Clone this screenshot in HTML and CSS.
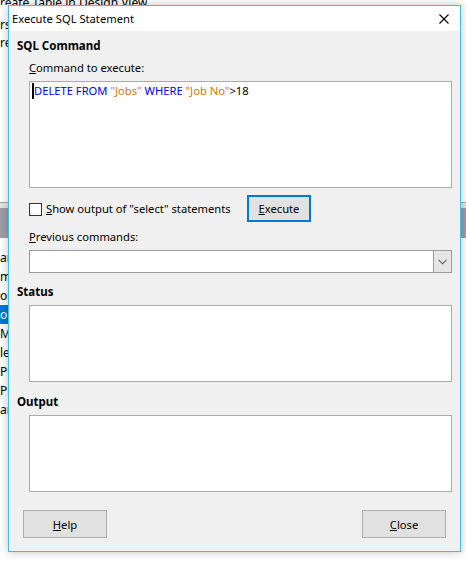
FILE: index.html
```html
<!DOCTYPE html>
<html>
<head>
<meta charset="utf-8">
<link rel="stylesheet" href="styles.css">
</head>
<body>
<div class="desktop">
  <div class="bg-top">reate Table in Design View</div>
  <div class="bg-strip bg-strip-top">
    <div class="bg-row">rs</div>
    <div class="bg-row">re</div>
  </div>
  <div class="bg-header"></div>
  <div class="bg-strip bg-list">
    <div class="bg-row">ar</div>
    <div class="bg-row">m</div>
    <div class="bg-row">ob</div>
    <div class="bg-row selected">ob</div>
    <div class="bg-row">Me</div>
    <div class="bg-row">le</div>
    <div class="bg-row">Pr</div>
    <div class="bg-row">Pr</div>
    <div class="bg-row">ar</div>
  </div>

  <div class="dialog">
    <div class="titlebar">
      <span class="title">Execute SQL Statement</span>
      <svg class="close-x" width="10" height="10" viewBox="0 0 10 10"><path d="M0.5 0.5 L9.5 9.5 M9.5 0.5 L0.5 9.5" stroke="#000" stroke-width="1.1" fill="none"/></svg>
    </div>
    <div class="body">
      <div class="heading h-sql">SQL Command</div>
      <div class="indent">
        <div class="label l-cmd"><u>C</u>ommand to execute:</div>
        <div class="editor"><span class="caret"></span><span class="kw">DELETE FROM</span> <span class="str">"Jobs"</span> <span class="kw">WHERE</span> <span class="str">"Job No"</span>&gt;18</div>
        <div class="row-exec">
          <label class="check"><span class="box"></span><span><u>S</u>how output of "select" statements</span></label>
          <button class="btn btn-exec"><u>E</u>xecute</button>
        </div>
        <div class="label l-prev"><u>P</u>revious commands:</div>
        <div class="combo">
          <div class="combo-field"></div>
          <div class="combo-btn">
            <svg width="9" height="6" viewBox="0 0 9 6"><path d="M0.5 0.8 L4.5 4.8 L8.5 0.8" stroke="#5a5a5a" stroke-width="1.1" fill="none"/></svg>
          </div>
        </div>
      </div>
      <div class="heading h-status">Status</div>
      <div class="indent">
        <div class="box-area"></div>
      </div>
      <div class="heading h-output">Output</div>
      <div class="indent">
        <div class="box-area"></div>
      </div>
      <div class="footer">
        <button class="btn btn-foot"><u>H</u>elp</button>
        <button class="btn btn-foot"><u>C</u>lose</button>
      </div>
    </div>
  </div>
</div>
</body>
</html>
```
FILE: styles.css
```css
* { box-sizing: border-box; }
html, body {
  margin: 0;
  padding: 0;
  width: 466px;
  height: 562px;
  overflow: hidden;
  background: #ffffff;
  font-family: "Noto Sans", "Open Sans", sans-serif;
  font-size: 11.2px;
  color: #000;
}
.desktop {
  position: relative;
  width: 466px;
  height: 562px;
  overflow: hidden;
  background: #fff;
}
.bg-top {
  position: absolute;
  left: 0;
  top: -4px;
  height: 9px;
  line-height: 14px;
  overflow: hidden;
  white-space: nowrap;
  font-size: 12px;
}
.bg-strip {
  position: absolute;
  left: 0;
  width: 8px;
  overflow: hidden;
}
.bg-strip-top { top: 16px; }
.bg-row {
  height: 18px;
  line-height: 18px;
  white-space: nowrap;
  font-size: 12px;
  color: #000;
}
.bg-header {
  position: absolute;
  left: 0;
  top: 202px;
  width: 466px;
  height: 36px;
  border-top: 1px solid #a8a8a8;
  background: linear-gradient(#e3e3e3 0, #e3e3e3 5px, #9e9ea6 5px, #9e9ea6 100%);
}
.bg-list { top: 248px; }
.bg-list .bg-row {
  height: 19px;
  line-height: 19px;
}
.bg-list .selected {
  background: #0078d7;
  color: #fff;
}

.dialog {
  position: absolute;
  left: 8px;
  top: 5px;
  width: 453px;
  height: 547px;
  border: 1px solid #47bbe1;
  background: #f0f0f0;
  box-shadow: 0 0 9px rgba(0,0,0,0.25);
  display: flex;
  flex-direction: column;
}
.titlebar {
  height: 25px;
  background: #fff;
  display: flex;
  align-items: center;
  justify-content: space-between;
  padding: 0 11px 1px 3px;
  flex: none;
}
.title {
  font-size: 11.2px;
}
.close-x { display: block; margin-top: 1px; }
.body {
  flex: 1;
  padding: 0 8px;
  display: flex;
  flex-direction: column;
}
.heading {
  font-weight: bold;
  font-size: 11.5px;
  line-height: 16px;
  height: 16px;
}
.h-sql { margin-top: 7px; }
.h-status { margin-top: 11px; }
.h-output { margin-top: 12px; }
.indent {
  padding-left: 12px;
}
.label {
  line-height: 16px;
  height: 16px;
}
.l-cmd { margin-top: 6px; }
.l-prev { margin-top: 7px; }
.editor {
  margin-top: 5px;
  height: 107px;
  background: #fff;
  border: 1px solid #ababab;
  padding: 1px 0 0 2px;
  line-height: 16px;
  white-space: pre;
}
.caret {
  display: inline-block;
  width: 2px;
  height: 16px;
  background: #000;
  vertical-align: top;
}
.kw { color: #0000e6; }
.str { color: #ce7b00; }
.row-exec {
  margin-top: 7px;
  height: 27px;
  display: flex;
  align-items: center;
}
.check {
  display: flex;
  align-items: center;
  gap: 4px;
  width: 218px;
}
.box {
  display: inline-block;
  width: 13px;
  height: 13px;
  border: 1px solid #333;
  background: #fff;
  margin-top: 1px;
  flex: none;
}
.btn {
  font-family: inherit;
  font-size: 11.2px;
  background: #e1e1e1;
  border: 1px solid #adadad;
  color: #000;
  padding: 0;
  margin: 0;
}
.btn-exec {
  width: 64px;
  height: 27px;
  border: 2px solid #0078d7;
}
.combo {
  margin-top: 5px;
  height: 23px;
  display: flex;
  border: 1px solid #999;
  background: #fff;
}
.combo-field { flex: 1; }
.combo-btn {
  width: 18px;
  background: #e6e6e6;
  border-left: 1px solid #999;
  display: flex;
  align-items: center;
  justify-content: center;
}
.combo-btn svg { display: block; margin-top: 1px; }
.box-area {
  margin-top: 5px;
  height: 77px;
  background: #fff;
  border: 1px solid #ababab;
}
.footer {
  margin-top: 18px;
  display: flex;
  justify-content: space-between;
  padding: 0 6px;
}
.btn-foot {
  width: 84px;
  height: 28px;
}
```
